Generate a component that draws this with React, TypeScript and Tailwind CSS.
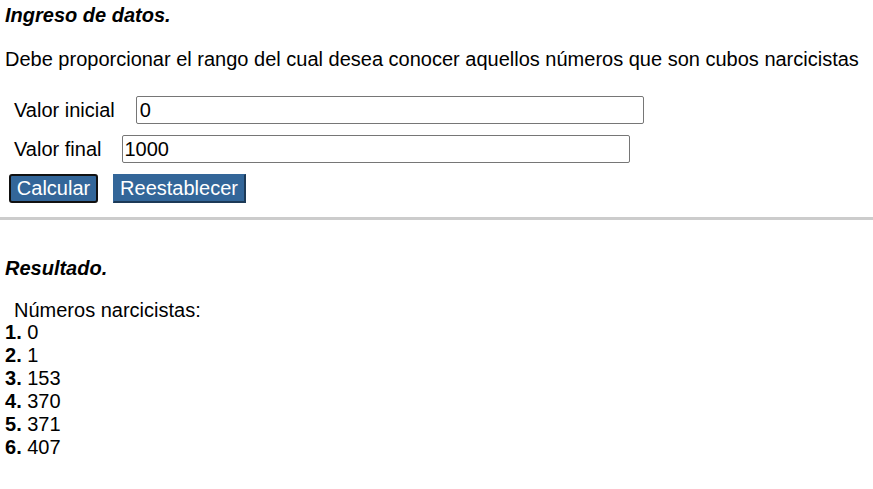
export default function App() {
  const numeros = [0, 1, 153, 370, 371, 407]

  return (
    <main className="bg-white min-h-screen text-black font-['Liberation_Sans',Arial,sans-serif] text-[20px] leading-[23px]">
      {/* INGRESO */}
      <section className="px-[5px] pt-[4px]">
        <h2 className="font-bold italic">Ingreso de datos.</h2>
        <p className="mt-[20px] pt-[1px]">
          Debe proporcionar el rango del cual desea conocer aquellos números que son cubos narcicistas
        </p>

        <div className="mt-[25px] pl-[9px] flex flex-col gap-[11px]">
          <label className="flex items-center gap-[21px]">
            <span>Valor inicial</span>
            <input
              defaultValue="0"
              className="w-[508px] h-[28px] border border-[#767676] rounded-[2px] px-[3px] outline-none"
            />
          </label>
          <label className="flex items-center gap-[21px]">
            <span>Valor final</span>
            <input
              defaultValue="1000"
              className="w-[508px] h-[28px] border border-[#767676] rounded-[2px] px-[1px] outline-none"
            />
          </label>
        </div>

        <div className="mt-[11px] pl-[4px] flex gap-[15px]">
          <button className="h-[29px] w-[89px] bg-[#336699] text-white border-2 border-[#111] rounded-[3px]">
            Calcular
          </button>
          <button className="h-[29px] w-[133px] bg-[#336699] text-white border border-[#336699] border-b-2 border-r-2 border-b-[#1d3a57] border-r-[#1d3a57]">
            Reestablecer
          </button>
        </div>
      </section>

      <hr className="mt-[14px] border-0 h-[3px] bg-[#cccccc]" />

      {/* RESULTADO */}
      <section className="px-[5px] pt-[37px]">
        <h2 className="font-bold italic">Resultado.</h2>
        <div className="mt-[19px] pl-[9px]">Números narcicistas:</div>
        <ol className="-mt-[1px]">
          {numeros.map((n, i) => (
            <li key={i}>
              <b>{i + 1}.</b> {n}
            </li>
          ))}
        </ol>
      </section>
    </main>
  )
}
